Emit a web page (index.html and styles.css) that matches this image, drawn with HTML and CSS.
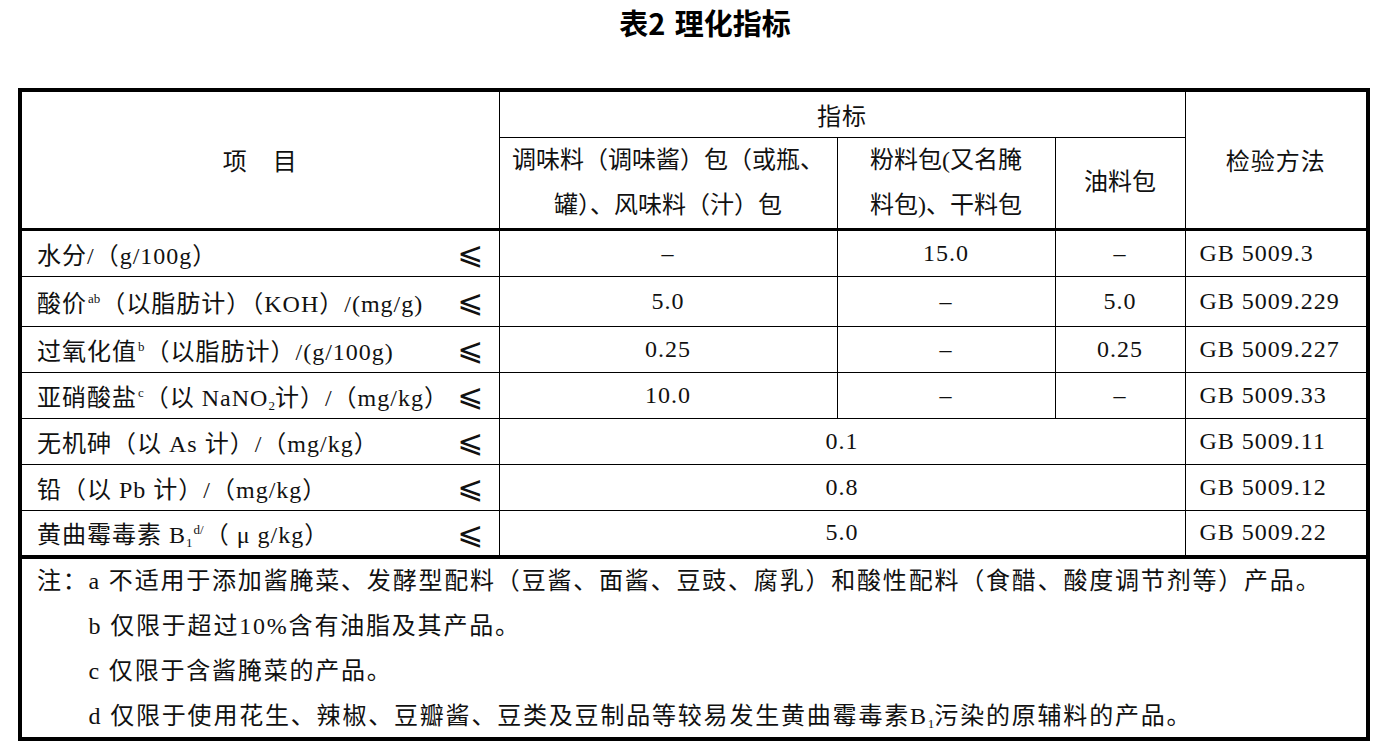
FILE: index.html
```html
<!DOCTYPE html>
<html lang="zh-CN">
<head>
<meta charset="utf-8">
<title>表2 理化指标</title>
<link rel="stylesheet" href="styles.css">
</head>
<body>
<div class="page">
  <h1 class="title">表2 理化指标</h1>
  <div class="sheet">
    <table class="spec">
      <colgroup>
        <col class="c-item"><col class="c-a"><col class="c-b"><col class="c-c"><col class="c-method">
      </colgroup>
      <thead>
        <tr class="h1">
          <th rowspan="2">项　目</th>
          <th colspan="3">指标</th>
          <th rowspan="2">检验方法</th>
        </tr>
        <tr class="h2">
          <th>调味料（调味酱）包（或瓶、<br>罐）、风味料（汁）包</th>
          <th>粉料包(又名腌<br>料包)、干料包</th>
          <th>油料包</th>
        </tr>
      </thead>
      <tbody>
        <tr class="r1">
          <td><div class="item"><span>水分/（g/100g）</span><span class="le">⩽</span></div></td>
          <td>–</td><td>15.0</td><td>–</td>
          <td class="method">GB 5009.3</td>
        </tr>
        <tr class="r2">
          <td><div class="item"><span>酸价<sup class="sup">ab</sup>（以脂肪计）（KOH）/(mg/g)</span><span class="le">⩽</span></div></td>
          <td>5.0</td><td>–</td><td>5.0</td>
          <td class="method">GB 5009.229</td>
        </tr>
        <tr class="r3">
          <td><div class="item"><span>过氧化值<sup class="sup">b</sup>（以脂肪计）/(g/100g)</span><span class="le">⩽</span></div></td>
          <td>0.25</td><td>–</td><td>0.25</td>
          <td class="method">GB 5009.227</td>
        </tr>
        <tr class="r4">
          <td><div class="item"><span>亚硝酸盐<sup class="sup">c</sup>（以 NaNO<sub class="sub">2</sub>计）/（mg/kg）</span><span class="le">⩽</span></div></td>
          <td>10.0</td><td>–</td><td>–</td>
          <td class="method">GB 5009.33</td>
        </tr>
        <tr class="r5">
          <td><div class="item"><span>无机砷（以 As 计）/（mg/kg）</span><span class="le">⩽</span></div></td>
          <td colspan="3">0.1</td>
          <td class="method">GB 5009.11</td>
        </tr>
        <tr class="r6">
          <td><div class="item"><span>铅（以 Pb 计）/（mg/kg）</span><span class="le">⩽</span></div></td>
          <td colspan="3">0.8</td>
          <td class="method">GB 5009.12</td>
        </tr>
        <tr class="r7">
          <td><div class="item"><span>黄曲霉毒素 B<sub class="sub">1</sub><sup class="sup">d/</sup>（ μ g/kg）</span><span class="le">⩽</span></div></td>
          <td colspan="3">5.0</td>
          <td class="method">GB 5009.22</td>
        </tr>
      </tbody>
    </table>
    <div class="notes">
      <span class="note-label">注：</span>
      <ul class="note-list">
        <li>a 不适用于添加酱腌菜、发酵型配料（豆酱、面酱、豆豉、腐乳）和酸性配料（食醋、酸度调节剂等）产品。</li>
        <li>b 仅限于超过10%含有油脂及其产品。</li>
        <li>c 仅限于含酱腌菜的产品。</li>
        <li>d 仅限于使用花生、辣椒、豆瓣酱、豆类及豆制品等较易发生黄曲霉毒素B<sub class="sub">1</sub>污染的原辅料的产品。</li>
      </ul>
    </div>
  </div>
</div>
</body>
</html>
```

FILE: styles.css
```css
html, body {
  margin: 0;
  background: #fff;
}

body {
  color: #111;
  font-family: "Liberation Serif", "Noto Sans CJK SC", serif;
}

.page {
  width: 1352px;
  padding: 0 16px 0 18px;
}

.title {
  margin: 0;
  height: 88px;
  box-sizing: border-box;
  padding: 5px 0 0 22px;
  text-align: center;
  font: 700 29px/34px "Noto Sans CJK SC", sans-serif;
  word-spacing: 3px;
  color: #000;
}

.sheet {
  border: 4px solid #000;
}

.spec {
  width: 100%;
  border-collapse: collapse;
  table-layout: fixed;
  border-style: hidden;
}

.c-item { width: 477px; }
.c-a { width: 338px; }
.c-b { width: 218px; }
.c-c { width: 130px; }
.c-method { width: 181px; }

.spec th,
.spec td {
  border: 1px solid #000;
  padding: 0;
  font-weight: 400;
  font-size: 24px;
  letter-spacing: 1px;
  text-align: center;
  vertical-align: middle;
  white-space: nowrap;
}

.h1 { height: 45px; }
.h2 { height: 91px; }
.h2 th {
  line-height: 45px;
  letter-spacing: 0;
}

.spec tbody tr:first-child td {
  border-top: 3px solid #000;
}

.r1 { height: 47px; }
.r2 { height: 50px; }
.r3, .r4, .r5, .r6 { height: 46px; }
.r7 { height: 45px; }

.item {
  display: flex;
  justify-content: space-between;
  align-items: center;
  padding: 0 15px 0 15px;
  text-align: left;
}

.le {
  font-family: "DejaVu Sans", sans-serif;
  font-size: 31px;
  line-height: 24px;
  letter-spacing: 0;
}

.spec .method {
  padding-left: 14px;
  text-align: left;
}

.sup {
  font-size: 13px;
  letter-spacing: 0;
  vertical-align: 9px;
  line-height: 0;
  margin: 0 1px;
}

.sub {
  font-size: 13px;
  letter-spacing: 0;
  vertical-align: -4px;
  line-height: 0;
}

.notes {
  display: flex;
  height: 178px;
  padding-left: 15px;
  border-top: 4px solid #000;
  font-size: 24px;
  letter-spacing: 1.8px;
  line-height: 45px;
}

.note-list {
  list-style: none;
  margin: 0;
  padding: 0;
}
```
